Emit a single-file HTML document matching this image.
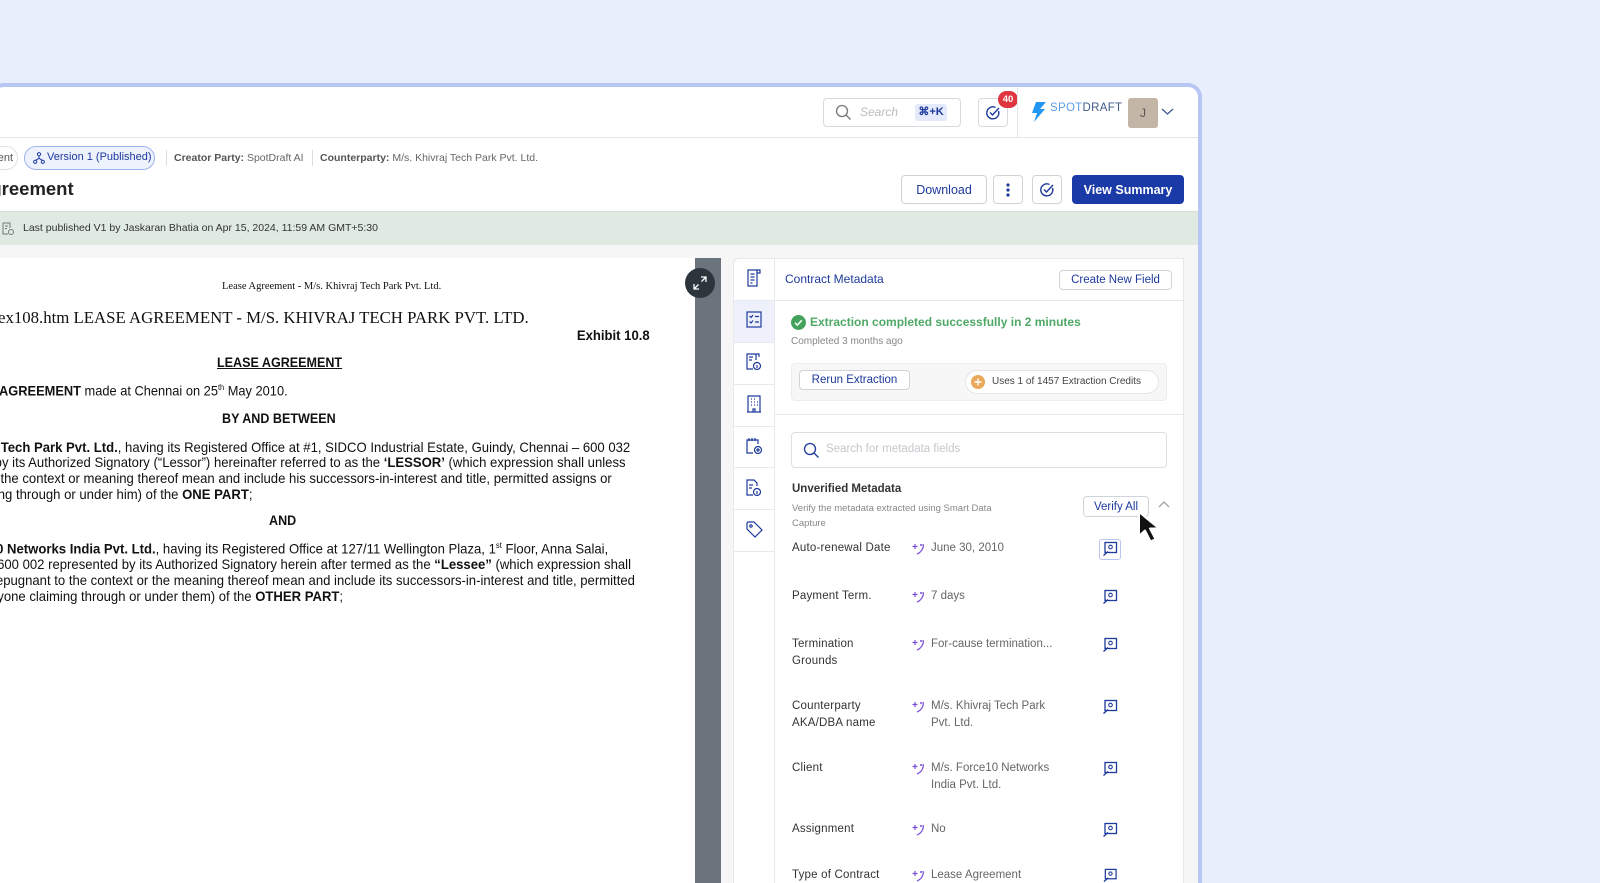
<!DOCTYPE html>
<html><head><meta charset="utf-8"><style>
*{margin:0;padding:0;box-sizing:border-box}
html{width:1600px;height:883px;overflow:hidden}
body{width:1600px;height:883px;overflow:hidden;background:#e9eefc;font-family:"Liberation Sans",sans-serif}
#root{position:relative;width:1600px;height:883px;overflow:hidden}
.abs{position:absolute}
.t{position:absolute;white-space:nowrap}
.btn{position:absolute;border:1px solid #cfd3da;border-radius:4px;background:#fff;color:#1d3a9c;font-size:12.5px;display:flex;align-items:center;justify-content:center}
.doc{position:absolute;left:0;top:258px;width:695px;height:625px;background:#fff;overflow:hidden;font-family:"Liberation Sans",sans-serif;color:#111}
.dl{position:absolute;right:0;white-space:nowrap;font-size:13.8px;transform:scaleX(0.95);transform-origin:right center}
.lab{position:absolute;left:792px;font-size:11.5px;color:#333;line-height:17px;letter-spacing:.2px}
.val{position:absolute;left:931px;font-size:11.5px;color:#666;line-height:17px}
.ai{position:absolute;left:911px;width:14px;height:14px}
.ic{position:absolute;left:1102px;width:16px;height:16px}
</style></head><body><div id="root">
<div class="abs" style="left:-10px;top:83px;width:1212px;height:800px;border:4px solid #b7c6f3;border-bottom:none;border-radius:14px 14px 0 0;background:#fff"></div>
<!-- header -->
<div class="abs" style="left:0;top:137px;width:1198px;height:1px;background:#e3e5ea"></div>
<div class="abs" style="left:823px;top:98px;width:138px;height:29px;border:1px solid #d6d9df;border-radius:4px"></div>
<svg class="abs" style="left:835px;top:104px" width="17" height="17" viewBox="0 0 17 17"><circle cx="7" cy="7" r="5.5" fill="none" stroke="#777" stroke-width="1.3"/><path d="M11 11l4.5 4.5" stroke="#777" stroke-width="1.3"/></svg>
<div class="t" style="left:860px;top:105px;font-size:12px;color:#bbb;font-style:italic">Search</div>
<div class="abs" style="left:915px;top:104px;width:32px;height:17px;background:#e4eafb;border-radius:3px;font-size:11px;color:#1d3a9c;font-weight:bold;text-align:center;line-height:17px">⌘+K</div>
<div class="abs" style="left:978px;top:98px;width:30px;height:29px;border:1px solid #d6d9df;border-radius:4px"></div>
<svg class="abs" style="left:985px;top:105px" width="16" height="16" viewBox="0 0 16 16"><path d="M13.5 6A6 6 0 1 1 10.5 2.5" fill="none" stroke="#1d3a9c" stroke-width="1.4"/><path d="M5 7.5l2.5 2.5 6.5-7" fill="none" stroke="#1d3a9c" stroke-width="1.4"/></svg>
<div class="abs" style="left:998px;top:91px;width:20px;height:17px;background:#e0343f;border-radius:9px;color:#fff;font-size:9.5px;font-weight:bold;text-align:center;line-height:17px">40</div>
<div class="abs" style="left:1017px;top:88px;width:1px;height:49px;background:#e3e5ea"></div>
<svg class="abs" style="left:1031px;top:101px" width="16" height="22" viewBox="0 0 16 22"><path d="M5 1h10L9 8h5L3 21l3-9H1z" fill="#2196f3"/></svg>
<div class="t" style="left:1050px;top:102px;font-size:11.5px;letter-spacing:.3px;color:#5b9ee6">SPOT<span style="color:#3f5a8a">DRAFT</span></div>
<div class="abs" style="left:1128px;top:98px;width:30px;height:30px;background:#c4b6a6;border-radius:3px;color:#555;font-size:12px;text-align:center;line-height:30px">J</div>
<svg class="abs" style="left:1161px;top:107px" width="13" height="9" viewBox="0 0 13 9"><path d="M1 2l5.5 5 5.5-5" fill="none" stroke="#3f5a9a" stroke-width="1.3"/></svg>
<!-- breadcrumb -->
<div class="abs" style="left:-20px;top:146px;width:38px;height:24px;border:1px solid #dde0e5;border-radius:12px;font-size:11px;color:#555;line-height:22px;text-align:right;padding-right:4px">ent</div>
<div class="abs" style="left:24px;top:146px;width:131px;height:24px;border:1.5px solid #9fb3ee;background:#eef2fd;border-radius:12px;font-size:11px;color:#1d3a9c;line-height:21px;padding-left:22px">Version 1 (Published)</div>
<svg class="abs" style="left:33px;top:152px" width="12" height="12" viewBox="0 0 12 12" fill="none" stroke="#1d3a9c" stroke-width="1"><circle cx="6" cy="2.2" r="1.6"/><circle cx="2.2" cy="9.8" r="1.6"/><circle cx="9.8" cy="9.8" r="1.6"/><path d="M6 3.8v2.5M6 6.3L2.6 8.3M6 6.3l3.4 2"/></svg>
<div class="abs" style="left:166px;top:150px;width:1px;height:16px;background:#ddd"></div>
<div class="t" style="left:174px;top:152px;font-size:10.5px;color:#666"><b style="color:#555">Creator Party:</b> SpotDraft AI</div>
<div class="abs" style="left:312px;top:150px;width:1px;height:16px;background:#ddd"></div>
<div class="t" style="left:320px;top:152px;font-size:10.5px;color:#666"><b style="color:#555">Counterparty:</b> M/s. Khivraj Tech Park Pvt. Ltd.</div>
<div class="t" style="left:-23px;top:178px;font-size:18.5px;font-weight:bold;color:#222">Agreement</div>
<div class="btn" style="left:901px;top:175px;width:86px;height:29px">Download</div>
<div class="btn" style="left:993px;top:175px;width:30px;height:29px"><svg width="4" height="14"><circle cx="2" cy="2" r="1.6" fill="#1d3a9c"/><circle cx="2" cy="7" r="1.6" fill="#1d3a9c"/><circle cx="2" cy="12" r="1.6" fill="#1d3a9c"/></svg></div>
<div class="btn" style="left:1032px;top:175px;width:30px;height:29px"><svg width="16" height="16" viewBox="0 0 16 16"><path d="M13.5 6A6 6 0 1 1 10.5 2.5" fill="none" stroke="#1d3a9c" stroke-width="1.4"/><path d="M5 7.5l2.5 2.5 6.5-7" fill="none" stroke="#1d3a9c" stroke-width="1.4"/></svg></div>
<div class="btn" style="left:1072px;top:175px;width:112px;height:29px;background:#1a3aa8;border-color:#1a3aa8;color:#fff;font-weight:bold">View Summary</div>
<!-- banner -->
<div class="abs" style="left:0;top:211px;width:1198px;height:34px;background:#dfeae2;border-top:1px solid #d3e0d6"></div>
<svg class="abs" style="left:2px;top:222px" width="12" height="13" viewBox="0 0 12 13" fill="none" stroke="#777" stroke-width="1"><path d="M1 1h7v5M1 1v11h5"/><path d="M3 4h3M3 6.5h2"/><circle cx="9" cy="10" r="2.5"/></svg>
<div class="t" style="left:23px;top:222px;font-size:10.5px;color:#333">Last published V1 by Jaskaran Bhatia on Apr 15, 2024, 11:59 AM GMT+5:30</div>
<!-- content bg -->
<div class="abs" style="left:0;top:245px;width:1198px;height:638px;background:#f6f6f7"></div>
<!-- document -->
<div class="doc">
<div class="t" style="left:222px;top:23px;font-family:'Liberation Serif',serif;font-size:10.5px">Lease Agreement - M/s. Khivraj Tech Park Pvt. Ltd.</div>
<div class="t" style="left:-2px;top:50px;font-family:'Liberation Serif',serif;font-size:16.8px">ex108.htm LEASE AGREEMENT - M/S. KHIVRAJ TECH PARK PVT. LTD.</div>
<div class="dl" style="right:45px;top:70px;font-weight:bold">Exhibit 10.8</div>
<div class="t" style="left:217px;top:97px;font-size:13.5px;font-weight:bold;text-decoration:underline;transform:scaleX(.93);transform-origin:left">LEASE AGREEMENT</div>
<div class="t" style="left:-1px;top:125px;font-size:13.8px;transform:scaleX(.93);transform-origin:left"><b>AGREEMENT</b> made at Chennai on 25<sup style="font-size:8px">th</sup> May 2010.</div>
<div class="t" style="left:222px;top:153px;font-size:13.5px;font-weight:bold;transform:scaleX(.93);transform-origin:left">BY AND BETWEEN</div>
<div class="dl" style="right:65px;top:182px"><b>Khivraj Tech Park Pvt. Ltd.</b>, having its Registered Office at #1, SIDCO Industrial Estate, Guindy, Chennai – 600 032</div>
<div class="dl" style="right:69px;top:197px">represented by its Authorized Signatory (“Lessor”) hereinafter referred to as the <b>‘LESSOR’</b> (which expression shall unless</div>
<div class="dl" style="right:83px;top:213px">repugnant to the context or meaning thereof mean and include his successors-in-interest and title, permitted assigns or</div>
<div class="dl" style="right:442px;top:229px">anyone claiming through or under him) of the <b>ONE PART</b>;</div>
<div class="t" style="left:269px;top:255px;font-size:13.5px;font-weight:bold;transform:scaleX(.93);transform-origin:left">AND</div>
<div class="dl" style="right:87px;top:283px"><b>M/s. Force10 Networks India Pvt. Ltd.</b>, having its Registered Office at 127/11 Wellington Plaza, 1<sup style="font-size:8px">st</sup> Floor, Anna Salai,</div>
<div class="dl" style="right:64px;top:299px">Chennai – 600 002 represented by its Authorized Signatory herein after termed as the <b>“Lessee”</b> (which expression shall</div>
<div class="dl" style="right:60px;top:315px">unless repugnant to the context or the meaning thereof mean and include its successors-in-interest and title, permitted</div>
<div class="dl" style="right:352px;top:331px">assigns or anyone claiming through or under them) of the <b>OTHER PART</b>;</div>
</div>
<div class="abs" style="left:695px;top:258px;width:26px;height:625px;background:#6b747d"></div>
<div class="abs" style="left:685px;top:268px;width:30px;height:30px;border-radius:50%;background:#2c343c"></div>
<svg class="abs" style="left:692px;top:275px" width="16" height="16" viewBox="0 0 16 16" fill="none" stroke="#fff" stroke-width="1.3"><path d="M9 2h5v5M14 2L9.5 6.5M7 14H2V9M2 14l4.5-4.5"/></svg>
<!-- sidebar -->
<div class="abs" style="left:733px;top:258px;width:42px;height:625px;background:#fff;border:1px solid #e6e8ec;border-right:none;border-bottom:none;border-radius:6px 0 0 0"></div>
<div class="abs" style="left:734px;top:300px;width:40px;height:42px;background:#eef1fb"></div>
<div class="abs" style="left:734px;top:300px;width:40px;height:1px;background:#e6e8ec"></div>
<div class="abs" style="left:734px;top:342px;width:40px;height:1px;background:#e6e8ec"></div>
<div class="abs" style="left:734px;top:384px;width:40px;height:1px;background:#e6e8ec"></div>
<div class="abs" style="left:734px;top:426px;width:40px;height:1px;background:#e6e8ec"></div>
<div class="abs" style="left:734px;top:467px;width:40px;height:1px;background:#e6e8ec"></div>
<div class="abs" style="left:734px;top:509px;width:40px;height:1px;background:#e6e8ec"></div>
<div class="abs" style="left:734px;top:551px;width:40px;height:1px;background:#e6e8ec"></div>
<svg class="abs" style="left:746px;top:269px" width="16" height="18" viewBox="0 0 16 18" fill="none" stroke="#1d3a9c" stroke-width="1.2"><path d="M2 1h9v16H2zM11 1h3v3h-3M4.5 5h4M4.5 8h4M4.5 11h4M4.5 14h2"/></svg>
<svg class="abs" style="left:746px;top:311px" width="16" height="17" viewBox="0 0 16 17" fill="none" stroke="#1d3a9c" stroke-width="1.2"><rect x="1" y="1" width="14" height="15"/><path d="M3.5 5l1.5 1.5 2-2.5M9 5.5h4M3.5 10.5l1.5 1.5 2-2.5M9 11h4"/></svg>
<svg class="abs" style="left:746px;top:353px" width="16" height="18" viewBox="0 0 16 18" fill="none" stroke="#1d3a9c" stroke-width="1.2"><path d="M7 16H1V1h9v6M3 4h4M3 7h3M10 1h3v3"/><circle cx="11" cy="13" r="3.5"/><path d="M11 12v3"/></svg>
<svg class="abs" style="left:746px;top:395px" width="16" height="18" viewBox="0 0 16 18" fill="none" stroke="#1d3a9c" stroke-width="1.2"><path d="M2 17V1h12v16M1 17h14M5 4h1M8 4h1M11 4h0M5 7h1M8 7h1M11 7h1M5 10h1M8 10h1M11 10h1M7 17v-3h2v3"/></svg>
<svg class="abs" style="left:746px;top:437px" width="17" height="18" viewBox="0 0 17 18" fill="none" stroke="#1d3a9c" stroke-width="1.2"><path d="M7 16H1V3h11v4M3 1v3M6 1v3M9 1v3"/><circle cx="12" cy="13" r="3.5"/><path d="M12 11v4M10 13h4"/></svg>
<svg class="abs" style="left:746px;top:479px" width="16" height="18" viewBox="0 0 16 18" fill="none" stroke="#1d3a9c" stroke-width="1.2"><path d="M7 16H1V1h7l3 3v3M3 6h4M3 9h3"/><circle cx="11" cy="13" r="3.5"/><path d="M11 12v3"/></svg>
<svg class="abs" style="left:746px;top:521px" width="17" height="17" viewBox="0 0 17 17" fill="none" stroke="#1d3a9c" stroke-width="1.2"><path d="M1 2v6l8 8 7-7-8-8H2z"/><circle cx="5" cy="5" r="1.2"/></svg>
<!-- panel -->
<div class="abs" style="left:774px;top:258px;width:410px;height:625px;background:#fff;border:1px solid #e6e8ec;border-bottom:none"></div>
<div class="abs" style="left:775px;top:300px;width:408px;height:1px;background:#e6e8ec"></div>
<div class="t" style="left:785px;top:272px;font-size:12px;color:#1d3a9c">Contract Metadata</div>
<div class="btn" style="left:1059px;top:270px;width:113px;height:20px;font-size:11.5px">Create New Field</div>
<svg class="abs" style="left:791px;top:315px" width="15" height="15"><circle cx="7.5" cy="7.5" r="7.5" fill="#43a35c"/><path d="M4 7.8l2.3 2.3 4.5-4.8" fill="none" stroke="#fff" stroke-width="1.5"/></svg>
<div class="t" style="left:810px;top:315px;font-size:12px;font-weight:bold;color:#4fa865">Extraction completed successfully in 2 minutes</div>
<div class="t" style="left:791px;top:336px;font-size:10px;color:#888">Completed 3 months ago</div>
<div class="abs" style="left:791px;top:363px;width:376px;height:38px;background:#f7f7f8;border:1px solid #ebecef;border-radius:4px"></div>
<div class="btn" style="left:799px;top:370px;width:111px;height:20px;font-size:11.5px">Rerun Extraction</div>
<div class="abs" style="left:965px;top:370px;width:194px;height:24px;background:#fff;border:1px solid #e4e5e8;border-radius:12px"></div>
<svg class="abs" style="left:971px;top:375px" width="14" height="14"><circle cx="7" cy="7" r="7" fill="#e9a85a"/><path d="M7 3.5v7M3.5 7h7" stroke="#fff" stroke-width="1.4"/></svg>
<div class="t" style="left:992px;top:376px;font-size:10px;color:#444">Uses 1 of 1457 Extraction Credits</div>
<div class="abs" style="left:775px;top:414px;width:408px;height:1px;background:#e6e8ec"></div>
<div class="abs" style="left:791px;top:432px;width:376px;height:36px;border:1px solid #dcdfe4;border-radius:4px"></div>
<svg class="abs" style="left:803px;top:442px" width="17" height="17" viewBox="0 0 17 17"><circle cx="7" cy="7" r="5.5" fill="none" stroke="#1d3a9c" stroke-width="1.3"/><path d="M11 11l4.5 4.5" stroke="#1d3a9c" stroke-width="1.3"/></svg>
<div class="t" style="left:826px;top:443px;font-size:11.5px;color:#c4c7cc">Search for metadata fields</div>
<div class="t" style="left:792px;top:483px;font-size:11.5px;font-weight:bold;color:#333">Unverified Metadata</div>
<div class="t" style="left:792px;top:501px;font-size:9.5px;color:#888;line-height:15px">Verify the metadata extracted using Smart Data<br>Capture</div>
<div class="btn" style="left:1083px;top:496px;width:66px;height:21px;font-size:11.5px">Verify All</div>
<svg class="abs" style="left:1158px;top:500px" width="12" height="8"><path d="M1 7l5-5 5 5" fill="none" stroke="#999" stroke-width="1.2"/></svg>
<!-- rows -->
<div class="lab" style="top:540px">Auto-renewal Date</div><div class="val" style="top:540px">June 30, 2010</div>
<div class="lab" style="top:588px">Payment Term.</div><div class="val" style="top:588px">7 days</div>
<div class="lab" style="top:636px">Termination<br>Grounds</div><div class="val" style="top:636px">For-cause termination...</div>
<div class="lab" style="top:698px">Counterparty<br>AKA/DBA name</div><div class="val" style="top:698px">M/s. Khivraj Tech Park<br>Pvt. Ltd.</div>
<div class="lab" style="top:760px">Client</div><div class="val" style="top:760px">M/s. Force10 Networks<br>India Pvt. Ltd.</div>
<div class="lab" style="top:821px">Assignment</div><div class="val" style="top:821px">No</div>
<div class="lab" style="top:868px;line-height:15px">Type of Contract</div><div class="val" style="top:868px;line-height:15px">Lease Agreement</div>
<div class="abs" style="left:1099px;top:539px;width:22px;height:21px;border:1px solid #b8c6f0;border-radius:3px"></div>
<svg width="0" height="0" style="position:absolute"><defs>
<symbol id="ai" viewBox="0 0 14 14"><path d="M12 2c1 3-1 8-6 10" fill="none" stroke="#7b4fd8" stroke-width="1.3"/><path d="M4 2v5M1.5 4.5h5" stroke="#7b4fd8" stroke-width="1.2"/><circle cx="10" cy="3" r="1" fill="#7b4fd8"/></symbol>
<symbol id="ic" viewBox="0 0 16 16"><rect x="3" y="1.5" width="11.5" height="10" fill="none" stroke="#1d3a9c" stroke-width="1.3"/><circle cx="8.5" cy="6" r="1.8" fill="none" stroke="#1d3a9c" stroke-width="1.1"/><path d="M1.5 14.5l4.5-4" stroke="#1d3a9c" stroke-width="1.4"/></symbol>
</defs></svg>
<svg class="ai" style="top:542px"><use href="#ai"/></svg><svg class="ic" style="top:541px"><use href="#ic"/></svg>
<svg class="ai" style="top:590px"><use href="#ai"/></svg><svg class="ic" style="top:589px"><use href="#ic"/></svg>
<svg class="ai" style="top:638px"><use href="#ai"/></svg><svg class="ic" style="top:637px"><use href="#ic"/></svg>
<svg class="ai" style="top:700px"><use href="#ai"/></svg><svg class="ic" style="top:699px"><use href="#ic"/></svg>
<svg class="ai" style="top:762px"><use href="#ai"/></svg><svg class="ic" style="top:761px"><use href="#ic"/></svg>
<svg class="ai" style="top:823px"><use href="#ai"/></svg><svg class="ic" style="top:822px"><use href="#ic"/></svg>
<svg class="ai" style="top:869px"><use href="#ai"/></svg><svg class="ic" style="top:868px;height:15px"><use href="#ic"/></svg>
<!-- cursor -->
<svg class="abs" style="left:1136px;top:510px" width="40" height="42" viewBox="0 0 40 42"><path d="M3 2l0 24 6-5.5 5.5 11 5-2.4-5.5-10.6 9 0z" fill="#111" stroke="#fff" stroke-width="2" stroke-linejoin="round"/></svg>
</div></body></html>
